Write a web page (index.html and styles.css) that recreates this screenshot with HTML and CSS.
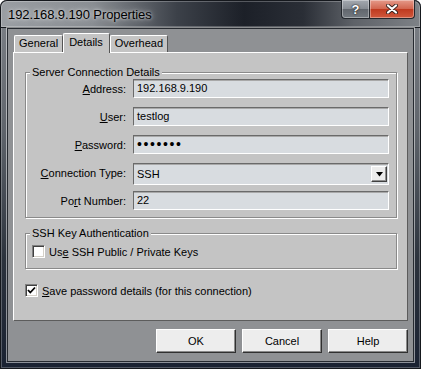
FILE: index.html
```html
<!DOCTYPE html>
<html lang="en">
<head>
  <meta charset="UTF-8" />
  <title>192.168.9.190 Properties</title>
  <link rel="stylesheet" href="styles.css">
</head>
<body>
  <div class="window">
    <div class="titlebar">
      <span class="title">192.168.9.190 Properties</span>
      <div class="cap-btns">
        <span class="cap-btn cap-help">?</span>
        <span class="cap-btn cap-close">
          <svg width="12" height="10" viewBox="0 0 12 10">
            <path d="M2 1.5 L10 8.5 M10 1.5 L2 8.5" stroke="#3a2420" stroke-width="4" stroke-linecap="round"/>
            <path d="M2 1.5 L10 8.5 M10 1.5 L2 8.5" stroke="#fff" stroke-width="2.2" stroke-linecap="round"/>
          </svg>
        </span>
      </div>
    </div>

    <div class="client">
      <div class="tabs">
        <span class="tab">General</span>
        <span class="tab active">Details</span>
        <span class="tab">Overhead</span>
      </div>

      <div class="page">
        <div class="group">
          <span class="group-title">Server Connection Details</span>
          <div class="form-grid">
            <label><u>A</u>ddress:</label>
            <div class="field">192.168.9.190</div>
            <label><u>U</u>ser:</label>
            <div class="field">testlog</div>
            <label><u>P</u>assword:</label>
            <div class="field"><span class="dots">&bull;&bull;&bull;&bull;&bull;&bull;&bull;</span></div>
            <label><u>C</u>onnection Type:</label>
            <div class="field combo">
              <span>SSH</span>
              <span class="combo-btn">
                <svg width="7" height="5" viewBox="0 0 7 5"><path d="M0 0 H7 L3.5 4.5 Z" fill="#000"/></svg>
              </span>
            </div>
            <label>Po<u>r</u>t Number:</label>
            <div class="field">22</div>
          </div>
        </div>

        <div class="group group-ssh">
          <span class="group-title">SSH Key Authentication</span>
          <div class="check-row">
            <span class="check"></span>
            <span>Us<u>e</u> SSH Public / Private Keys</span>
          </div>
        </div>

        <div class="check-row save-row">
          <span class="check">
            <svg width="9" height="9" viewBox="0 0 9 9"><path d="M1 4 L3.3 6.5 L8 1.5" stroke="#000" stroke-width="1.8" fill="none"/></svg>
          </span>
          <span><u>S</u>ave password details (for this connection)</span>
        </div>
      </div>

      <div class="buttons">
        <button class="btn">OK</button>
        <button class="btn">Cancel</button>
        <button class="btn">Help</button>
      </div>
    </div>
  </div>
</body>
</html>
```

FILE: styles.css
```css
* {
  box-sizing: border-box;
}
body {
  margin: 0;
  font-family: 'Liberation Sans', Arial, sans-serif;
  font-size: 11px;
  color: #000;
  background: #fff;
}
.window {
  width: 421px;
  height: 369px;
  display: flex;
  flex-direction: column;
  border-radius: 7px 7px 0 0;
  background: linear-gradient(180deg, #7f8389 0%, #60656c 35%, #2c333d 70%, #1a2232 100%);
  box-shadow: inset 0 0 0 1px #15181d, inset 0 0 0 2px rgba(255, 255, 255, 0.25);
}
.titlebar {
  height: 28px;
  display: flex;
  justify-content: space-between;
  border-radius: 7px 7px 0 0;
  background: linear-gradient(90deg, #9a9ea3 0%, #8a8e93 22%, #3c4149 42%, #1c2028 58%, #2a2e36 72%, #5e6268 84%, #7e8287 100%);
  box-shadow: inset 0 0 0 1px #15181d, inset 0 0 0 2px rgba(255, 255, 255, 0.25);
}
.title {
  padding: 7px 0 0 8px;
  font-size: 13px;
  letter-spacing: -0.1px;
  color: #000;
  text-shadow: 0 0 6px rgba(255, 255, 255, 0.7), 0 0 3px rgba(255, 255, 255, 0.6);
}
.cap-btns {
  display: flex;
  align-self: flex-start;
  margin-right: 6px;
}
.cap-btn {
  height: 19px;
  display: flex;
  align-items: center;
  justify-content: center;
  border: 1px solid #23272d;
  border-top: none;
  box-shadow: inset 0 0 0 1px rgba(255, 255, 255, 0.35);
  color: #fff;
  font-weight: bold;
  font-size: 13px;
  text-shadow: 0 0 2px #222, 0 0 1px #000;
}
.cap-help {
  width: 28px;
  border-radius: 0 0 0 4px;
  border-right: none;
  background: linear-gradient(180deg, #a4a9b0 0%, #878c93 48%, #62676e 52%, #737980 100%);
}
.cap-close {
  width: 46px;
  border-radius: 0 0 4px 0;
  background: linear-gradient(180deg, #e59a8a 0%, #d26650 48%, #bf3a20 52%, #d0583c 100%);
}
.client {
  flex: 1;
  margin: 0 7px 7px;
  display: flex;
  flex-direction: column;
  padding: 4px 5px 0;
  background: #8f9194;
  border: 1px solid #262a30;
  box-shadow: 0 0 0 1px rgba(255, 255, 255, 0.5);
}
.tabs {
  position: relative;
  z-index: 1;
  height: 19px;
  display: flex;
  align-items: flex-end;
  padding-left: 1px;
}
.tab {
  height: 17px;
  padding: 0 4px;
  line-height: 15px;
  background: #c4c4c4;
  border: 1px solid;
  border-color: #fff #555 transparent #fff;
  border-bottom: none;
  border-radius: 2px 2px 0 0;
}
.tab.active {
  height: 20px;
  margin-bottom: -1px;
  padding: 0 6px 0 5px;
  line-height: 17px;
}
.page {
  height: 269px;
  padding: 19px 10px 0 11px;
  background: #c4c4c4;
  border: 1px solid;
  border-color: #fff #5c5c5c #5c5c5c #fff;
}
.group {
  position: relative;
  border: 1px solid #8a8a8a;
  box-shadow: inset 1px 1px 0 #fff, 1px 1px 0 #fff;
  margin-bottom: 15px;
}
.group-title {
  position: absolute;
  top: -8px;
  left: 4px;
  padding: 0 2px;
  line-height: 14px;
  background: #c4c4c4;
}
.form-grid {
  display: grid;
  grid-template-columns: 100px 1fr;
  grid-template-rows: repeat(5, 19px);
  column-gap: 7px;
  row-gap: 9px;
  padding: 6px 7px 7px 0;
}
.form-grid label {
  text-align: right;
  align-self: center;
}
.field {
  height: 19px;
  padding-left: 3px;
  line-height: 17px;
  background: #d8dce0;
  border: 1px solid;
  border-color: #6a6a6a #fff #fff #6a6a6a;
  box-shadow: inset 0 1px 0 #a8a8a8;
}
.dots {
  font-size: 14px;
  letter-spacing: 1.6px;
}
.combo {
  height: 22px;
  display: flex;
  align-items: center;
  justify-content: space-between;
  padding-right: 1px;
}
.combo-btn {
  width: 16px;
  height: 16px;
  display: flex;
  align-items: center;
  justify-content: center;
  background: #ececec;
  border: 1px solid;
  border-color: #fff #404040 #404040 #fff;
  box-shadow: inset -1px -1px 0 #909090;
}
.group-ssh {
  padding: 11px 6px 10px;
}
.check-row {
  height: 13px;
  display: flex;
  align-items: center;
  gap: 4px;
}
.check {
  width: 13px;
  height: 13px;
  display: flex;
  align-items: center;
  justify-content: center;
  background: #fff;
  border: 1px solid;
  border-color: #808080 #fff #fff #808080;
  box-shadow: inset 1px 1px 0 #404040, inset -1px -1px 0 #d4d0c8;
}
.save-row {
  margin-top: 12px;
}
.buttons {
  display: flex;
  justify-content: flex-end;
  gap: 6px;
  margin-top: 8px;
}
.btn {
  width: 80px;
  height: 24px;
  padding: 0;
  font: inherit;
  color: #000;
  background: #ededed;
  border: 1px solid;
  border-color: #fff #303030 #303030 #fff;
  box-shadow: inset -1px -1px 0 #8a8a8a;
}
```
